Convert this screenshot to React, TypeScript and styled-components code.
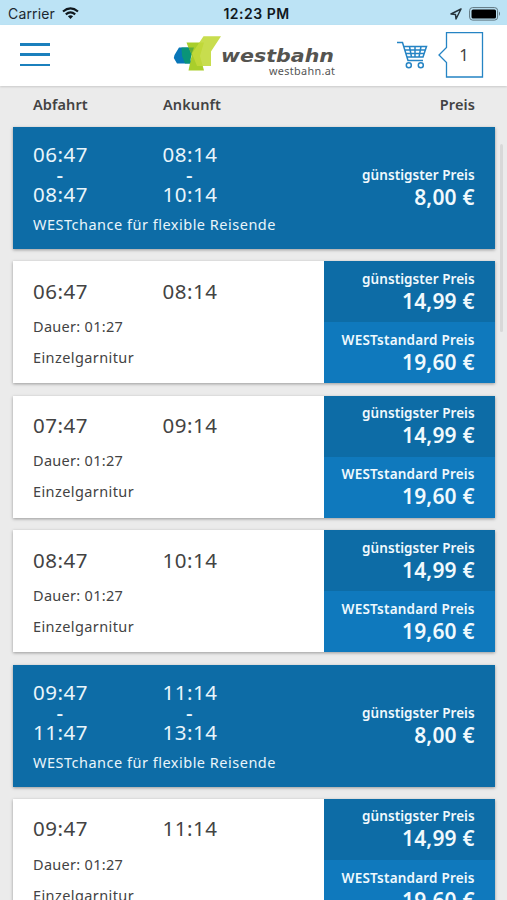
import React from "react";
import styled, { createGlobalStyle } from "styled-components";

const GlobalStyle = createGlobalStyle`
  * { box-sizing: border-box; }
  body { margin: 0; background: #ebebeb; font-family: "Noto Sans", sans-serif; color: #434343; overflow: hidden; }
`;

const Screen = styled.div`
  width: 507px;
  height: 900px;
  overflow: hidden;
  display: flex;
  flex-direction: column;
  position: relative;
`;

const StatusBar = styled.div`
  flex: none;
  height: 25px;
  padding: 2px 6px 0 8px;
  display: grid;
  grid-template-columns: 1fr auto 1fr;
  align-items: center;
  background: #bce3f5;
  font-family: Inter, sans-serif;
  font-size: 14px;
  line-height: 20px;
  color: #1c2830;
`;

const Carrier = styled.div`
  display: flex;
  align-items: center;
  gap: 7px;
  letter-spacing: 0.15px;
`;

const Clock = styled.div`
  font-weight: 600;
  font-size: 14px;
  letter-spacing: 0.5px;
  padding-left: 4px;
  color: #10181d;
`;

const StatusIcons = styled.div`
  display: flex;
  align-items: center;
  justify-content: flex-end;
  gap: 7px;
`;

const Header = styled.header`
  flex: none;
  height: 61px;
  padding: 0 22px 0 20px;
  display: flex;
  align-items: center;
  background: #fff;
  box-shadow: 0 1px 2px rgba(0, 0, 0, 0.14);
  position: relative;
`;

const MenuButton = styled.div`
  width: 30px;
  height: 23px;
  margin-top: -2px;
  display: flex;
  flex-direction: column;
  justify-content: space-between;
`;

const MenuLine = styled.div`
  height: 2.5px;
  background: #1b80bd;
`;

const Logo = styled.svg`
  display: block;
  margin-left: 122px;
`;

const CartIcon = styled.svg`
  display: block;
  margin: 0 0 2px 61px;
`;

const Badge = styled.svg`
  display: block;
  margin: 0 0 1px 10px;
`;

const ColumnHeads = styled.div`
  flex: none;
  height: 41px;
  padding: 0 32px 5px 33px;
  display: grid;
  grid-template-columns: 130px 1fr auto;
  align-items: center;
  font-size: 14.5px;
  font-weight: 600;
  letter-spacing: 0.1px;
  line-height: 20px;
`;

const List = styled.main`
  display: flex;
  flex-direction: column;
  gap: 12.3px;
  padding: 0 12.3px 0 13px;
`;

const Card = styled.section<{ $offer?: boolean }>`
  flex: none;
  height: 122.1px;
  display: flex;
  background: ${(p) => (p.$offer ? "#0d6ca6" : "#fff")};
  color: ${(p) => (p.$offer ? "#e9f5fb" : "#434343")};
  box-shadow: 0 1px 3px rgba(0, 0, 0, 0.35);
`;

const Journey = styled.div<{ $offer?: boolean }>`
  flex: 1;
  padding: ${(p) => (p.$offer ? "16.4px" : "18.4px")} 0 0 20px;
`;

const Times = styled.div`
  display: grid;
  grid-template-columns: 129.5px auto;
  justify-content: start;
  font-size: 20.5px;
  line-height: 22px;
  letter-spacing: 0.5px;
`;

const Time = styled.div``;

const Dash = styled.div`
  height: 18px;
  line-height: 18px;
  width: 54px;
  text-align: center;
  font-weight: 500;
`;

const Detail = styled.div<{ $top: number; $tracking: number }>`
  margin-top: ${(p) => p.$top}px;
  font-size: 14.5px;
  font-weight: 450;
  line-height: 20px;
  letter-spacing: ${(p) => p.$tracking}px;
`;

const Prices = styled.div`
  width: 171px;
  display: flex;
  flex-direction: column;
`;

const PriceBox = styled.div<{ $standard?: boolean }>`
  flex: 1;
  display: flex;
  flex-direction: column;
  justify-content: center;
  align-items: flex-end;
  padding: 0 20px 2px 0;
  background: ${(p) => (p.$standard ? "#0f79bd" : "#0d6ca6")};
  color: #f0f9fd;
  font-weight: 600;
`;

const PriceLabel = styled.div<{ $tracking: number }>`
  font-size: 13.5px;
  line-height: 20px;
  letter-spacing: ${(p) => p.$tracking}px;
`;

const Price = styled.div`
  font-size: 21px;
  line-height: 24px;
  font-weight: 600;
  letter-spacing: 0.2px;
`;

const ScrollThumb = styled.div`
  position: absolute;
  top: 144px;
  right: 4px;
  width: 3px;
  height: 188px;
  border-radius: 2px;
  background: #d8d8d8;
`;

const WifiIcon = () => (
  <svg width="17" height="13" viewBox="0 0 17 13" fill="none" stroke="#10181d" strokeWidth="2.2">
    <path d="M1 4.5Q8.5-1.7 16 4.5" />
    <path d="M3.8 7.4Q8.5 3.5 13.2 7.4" />
    <path d="M5.9 9.2Q8.5 7.2 11.1 9.2L8.5 12Z" fill="#10181d" stroke="none" />
  </svg>
);

const WestbahnLogo = () => (
  <Logo width="164" height="44" viewBox="0 0 164 44">
    <path d="M7 13.500H20L16 22L20 29.500H5L1.800 24L2.500 21Z" fill="#0876b8" />
    <path d="M14.500 8.500H32L28 22L32 36.500H16.500L19.500 22Z" fill="#a9ce2b" />
    <path d="M9.500 13.500H16.500L19.500 20L18 29.500H13L10 22Z" fill="#0a9478" />
    <path d="M16.500 13.500H22L19.500 20Z" fill="#5fae3a" />
    <path d="M31.500 2.200H49L39 17.500V32H25L20 19.500Z" fill="#c2d93b" fillOpacity=".9" />
    <text x="49" y="28" fontFamily="DejaVu Sans" fontWeight="700" fontStyle="italic" fontSize="17.500" textLength="113" lengthAdjust="spacingAndGlyphs" fill="#555450">westbahn</text>
    <text x="97" y="40.500" fontFamily="Noto Sans" fontSize="10.800" textLength="66" fill="#555">westbahn.at</text>
  </Logo>
);

const Cart = () => (
  <CartIcon width="31" height="28" viewBox="0 0 31 28" fill="none" stroke="#2584c4" strokeWidth="1.500">
    <path d="M0 1.500H5.500L11 19.500H26M6.500 5.500H29.500L26 16H10M8 9H28.500M9 12.500H27.500M12.500 5.500L14.500 16M18 5.500V16M24 5.500L22 16" />
    <circle cx="11.800" cy="24.300" r="2.500" />
    <circle cx="23.800" cy="24.300" r="2.500" />
  </CartIcon>
);

const trips = [
  { offer: true, from: "06:47", to: "08:14", fromEnd: "08:47", toEnd: "10:14" },
  { from: "06:47", to: "08:14" },
  { from: "07:47", to: "09:14" },
  { from: "08:47", to: "10:14" },
  { offer: true, from: "09:47", to: "11:14", fromEnd: "11:47", toEnd: "13:14" },
  { from: "09:47", to: "11:14" },
];

export default function App() {
  return (
    <Screen>
      <GlobalStyle />
      <StatusBar>
        <Carrier>Carrier <WifiIcon /></Carrier>
        <Clock>12:23 PM</Clock>
        <StatusIcons>
          <svg width="12" height="12" viewBox="0 0 12 12" fill="none" stroke="#26343c" strokeWidth="1.500" strokeLinejoin="round">
            <path d="M11 1L1 6L5.500 6.500L6 11Z" />
          </svg>
          <svg width="32" height="14" viewBox="0 0 32 14">
            <rect x=".6" y=".6" width="28" height="12.500" rx="3" fill="none" stroke="#5e747f" />
            <rect x="2.500" y="2.500" width="24.500" height="9" rx="1.500" fill="#000" />
            <path d="M30 4.500Q32 6.500 30 9Z" fill="#5e747f" />
          </svg>
        </StatusIcons>
      </StatusBar>
      <Header>
        <MenuButton><MenuLine /><MenuLine /><MenuLine /></MenuButton>
        <WestbahnLogo />
        <Cart />
        <Badge width="46" height="46" viewBox="0 0 46 46">
          <path d="M8.500 .7H44.500V45H8.500V30.500L1 23L8.500 15.500Z" fill="#fff" stroke="#2584c4" strokeWidth="1.300" />
          <text x="26" y="28.500" textAnchor="middle" fontFamily="Noto Sans" fontSize="16.500" fill="#434343">1</text>
        </Badge>
      </Header>
      <ColumnHeads><span>Abfahrt</span><span>Ankunft</span><span>Preis</span></ColumnHeads>
      <List>
        {trips.map((t, i) => (
          <Card key={i} $offer={t.offer}>
            <Journey $offer={t.offer}>
              <Times>
                <Time>{t.from}</Time><Time>{t.to}</Time>
                {t.offer && <><Dash>-</Dash><Dash>-</Dash><Time>{t.fromEnd}</Time><Time>{t.toEnd}</Time></>}
              </Times>
              {t.offer ? (
                <Detail $top={8.6} $tracking={0.5}>WESTchance für flexible Reisende</Detail>
              ) : (
                <>
                  <Detail $top={14.2} $tracking={0.3}>Dauer: 01:27</Detail>
                  <Detail $top={11} $tracking={0.4}>Einzelgarnitur</Detail>
                </>
              )}
            </Journey>
            <Prices>
              <PriceBox>
                <PriceLabel $tracking={0.05}>günstigster Preis</PriceLabel>
                <Price>{t.offer ? "8,00 €" : "14,99 €"}</Price>
              </PriceBox>
              {!t.offer && (
                <PriceBox $standard>
                  <PriceLabel $tracking={0.2}>WESTstandard Preis</PriceLabel>
                  <Price>19,60 €</Price>
                </PriceBox>
              )}
            </Prices>
          </Card>
        ))}
      </List>
      <ScrollThumb />
    </Screen>
  );
}
